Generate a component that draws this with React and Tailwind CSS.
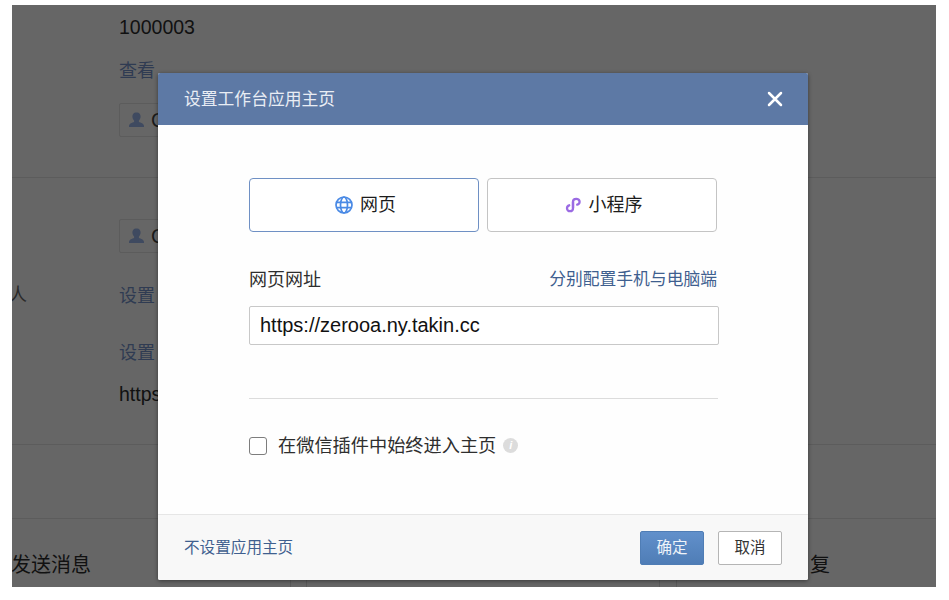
const FONT = "font-['Liberation_Sans','Noto_Sans_CJK_SC',sans-serif]";

function UserChip({ className }) {
  return (
    <div className={`flex h-[34px] w-[120px] items-center rounded-[2px] border border-[#5c5c5c] pl-[8px] ${className}`}>
      <svg width="18" height="18" viewBox="0 0 18 18" className="shrink-0">
        <path d="M9 1.500c2.300 0 3.600 1.700 3.600 4 0 1.700-.8 3.200-1.700 4v1.400c1.700.8 5.100 1.400 5.100 4.100v1H1v-1c0-2.700 3.400-3.300 5.100-4.100V9.500c-.9-.8-1.700-2.300-1.700-4 0-2.300 1.300-4 3.600-4z" fill="#3f4a60" />
      </svg>
      <span className="ml-[5px] text-[20px] leading-none text-[#1a1a1a]">C</span>
    </div>
  );
}

function ModeTab({ active, icon, label }) {
  return (
    <button className={`flex h-[54px] w-[230px] items-center justify-center gap-[7px] rounded-[4px] border bg-white pl-[3px] text-[18px] text-[#1c1c1c] ${active ? "border-[#6f90c4]" : "border-[#c4c4c4]"}`}>
      {icon}
      {label}
    </button>
  );
}

function GlobeIcon() {
  return (
    <svg width="18" height="18" viewBox="0 0 18 18" fill="none" stroke="#4a8ae5" strokeWidth="1.700">
      <circle cx="9" cy="9" r="8" />
      <ellipse cx="9" cy="9" rx="3.500" ry="8" />
      <path d="M1.500 6.300h15M1.500 11.700h15" />
    </svg>
  );
}

function MiniProgramIcon() {
  return (
    <svg width="17" height="16" viewBox="0 0 17 16" fill="none" stroke="#9b6be3" strokeWidth="2.300" strokeLinecap="round">
      <path d="M8 5v6.200c0 1.700-1.300 3-3 3s-3-1.300-3-3c0-1.400.9-2.500 2.200-2.900" />
      <path d="M8 10.800V4.800c0-1.700 1.300-3 3.200-3s3.400 1.300 3.400 3c0 1.400-.9 2.500-2.400 2.900" />
    </svg>
  );
}

export default function App() {
  return (
    <div className={`h-[600px] w-[949px] overflow-hidden bg-white pl-[12px] pt-[5px] ${FONT}`}>
      <div className="relative h-[582px] w-[924px] overflow-hidden bg-[#666666]">
        {/* page behind the dialog */}
        <div className="h-[173px] border-b border-[#5c5c5c] pl-[107px] pt-[10px]">
          <div className="text-[19.500px] leading-[24px] text-[#111]">1000003</div>
          <div className="mt-[20px] text-[18px] leading-[24px] text-[#2f3b52]">查看</div>
          <UserChip className="mt-[20px]" />
        </div>
        <div className="relative h-[267px] border-b border-[#5c5c5c] pl-[107px] pt-[41px]">
          <UserChip />
          <div className="mt-[31px] text-[18px] leading-[24px] text-[#2f3b52]">设置</div>
          <div className="mt-[33px] text-[18px] leading-[24px] text-[#2f3b52]">设置</div>
          <div className="mt-[17px] text-[19.500px] leading-[24px] text-[#111]">https</div>
          <span className="absolute left-[-3px] top-[105px] text-[18px] leading-[24px] text-[#2a2a2a]">人</span>
        </div>
        <div className="h-[74px] border-b border-[#5c5c5c]" />
        <div className="flex h-[60px] pr-[106px] pt-[33px] text-[20px] leading-[26px] text-[#111]">
          <span className="-ml-[1px]">发送消息</span>
          <span className="ml-auto">复</span>
        </div>
        {/* input edges that peek out under the dialog */}
        <span className="absolute bottom-0 left-[278px] h-[8px] border-l border-[#5a5a5a]" />
        <span className="absolute bottom-0 left-[294px] h-[8px] border-l border-[#5a5a5a]" />
        <span className="absolute bottom-0 left-[647px] h-[8px] border-l border-[#5a5a5a]" />
        <span className="absolute bottom-0 left-[664px] h-[8px] border-l border-[#5a5a5a]" />

        {/* dialog */}
        <div className="absolute left-[146px] top-[68px] flex h-[507px] w-[650px] flex-col overflow-hidden rounded-[2px] bg-white shadow-[0_1px_4px_rgba(0,0,0,0.45)]">
          <div className="flex h-[52px] shrink-0 items-center justify-between bg-[#5d79a5] pl-[26px] pr-[25px]">
            <span className="pt-[2px] text-[16.800px] text-[#e9edf4]">设置工作台应用主页</span>
            <svg width="16" height="16" viewBox="0 0 16 16" stroke="#fff" strokeWidth="2.500" strokeLinecap="round">
              <path d="M2 2l12 12M14 2L2 14" />
            </svg>
          </div>

          <div className="flex-1 bg-[#fefefe] pl-[91px] pr-[90px] pt-[53px]">
            <div className="flex gap-[8px]">
              <ModeTab active icon={<GlobeIcon />} label="网页" />
              <ModeTab icon={<MiniProgramIcon />} label="小程序" />
            </div>
            <div className="mt-[33px] flex items-center justify-between">
              <span className="text-[18px] leading-[30px] text-[#2e2e2e]">网页网址</span>
              <a className="pr-[1px] text-[16.800px] leading-[30px] text-[#3f5f8f]">分别配置手机与电脑端</a>
            </div>
            <input
              readOnly
              value="https://zerooa.ny.takin.cc"
              className="mt-[11px] block h-[39px] w-[470px] rounded-[2px] border border-[#c8c8c8] bg-white px-[10px] text-[20px] text-[#111] outline-none"
            />
            <div className="mt-[53px] w-[469px] border-t border-[#dcdcdc]" />
            <div className="mt-[35px] flex items-center">
              <span className="h-[18px] w-[18px] rounded-[3px] border border-[#7d7d7d] bg-white" />
              <span className="ml-[11px] text-[18.200px] leading-[24px] text-[#2e2e2e]">在微信插件中始终进入主页</span>
              <span className="ml-[7px] flex h-[15px] w-[15px] -translate-y-[1px] items-center justify-center rounded-full bg-[#dcdcdc] text-[11px] font-bold italic leading-none text-white">i</span>
            </div>
          </div>

          <div className="flex h-[66px] shrink-0 items-center justify-between border-t border-[#e6e6e6] bg-[#f8f8f8] pl-[26px] pr-[26px]">
            <a className="text-[15.600px] text-[#3f5f8f]">不设置应用主页</a>
            <div className="flex gap-[14px]">
              <button className="h-[34px] w-[64px] rounded-[2px] border border-[#4f7db5] bg-gradient-to-b from-[#6190cb] to-[#4f7db6] text-[15.500px] text-[#eef3f9]">确定</button>
              <button className="h-[34px] w-[64px] rounded-[2px] border border-[#b5b5b5] bg-white text-[15.500px] text-[#333]">取消</button>
            </div>
          </div>
        </div>
      </div>
    </div>
  );
}
